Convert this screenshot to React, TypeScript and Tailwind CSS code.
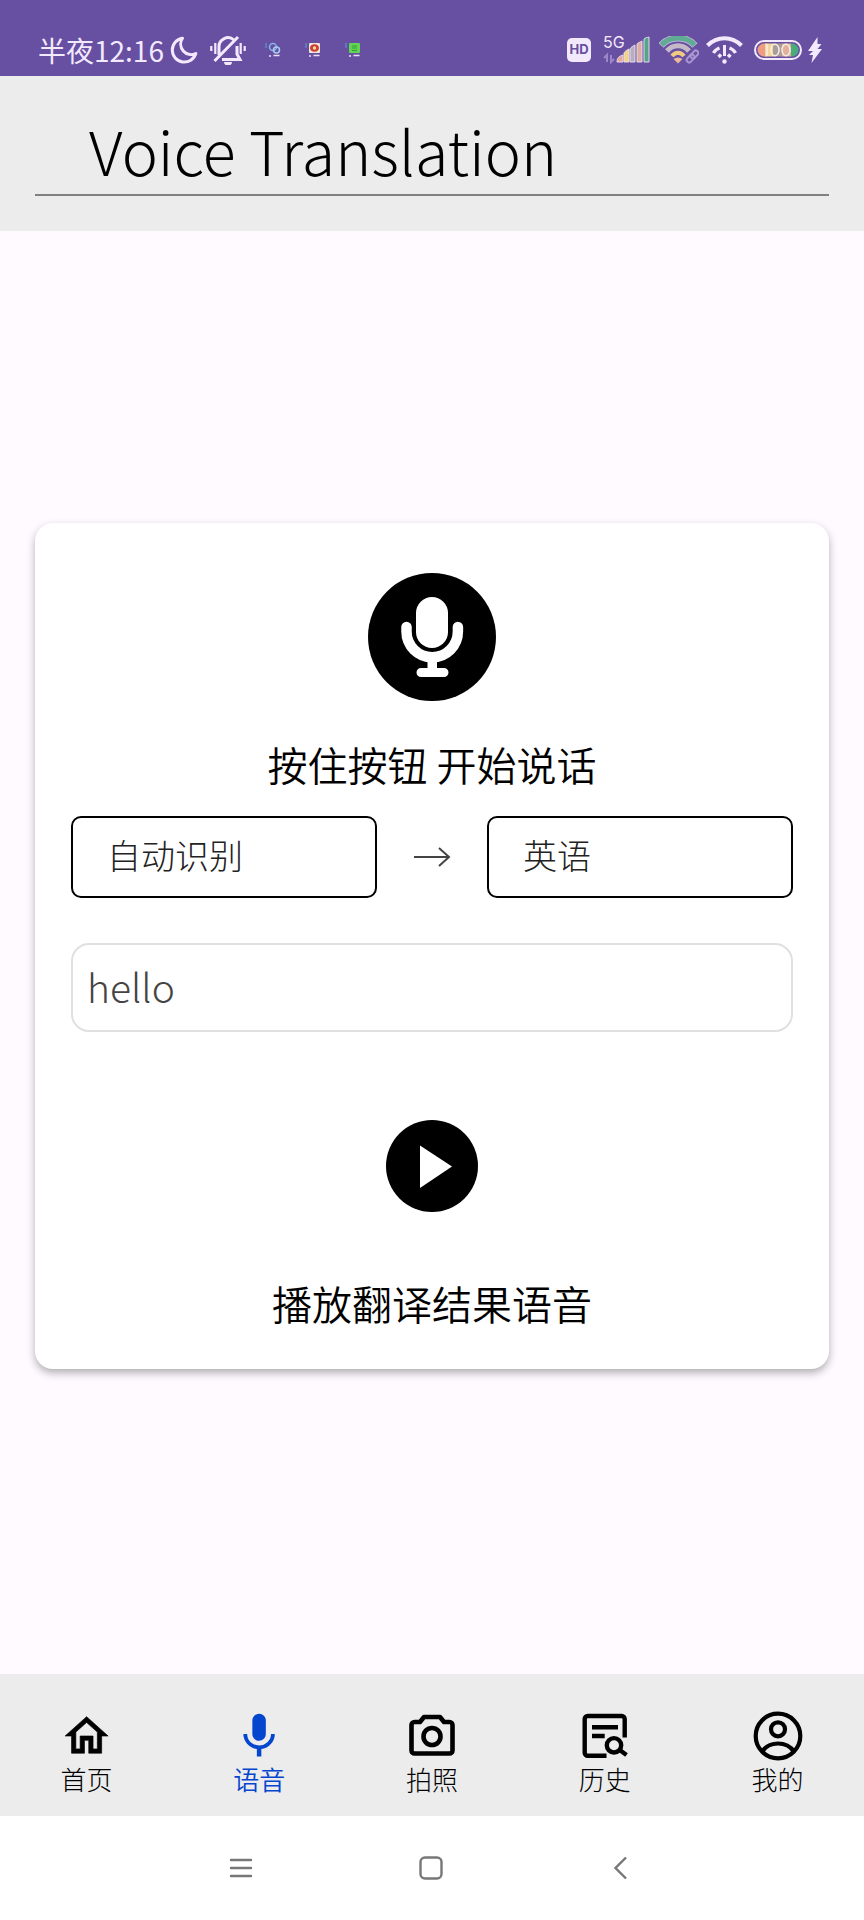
import type { ReactNode } from "react";

type Tab = { label: string; active?: boolean; icon: ReactNode };

const tabs: Tab[] = [
  {
    label: "首页",
    icon: (
      <path
        transform="translate(1.8 1.2) scale(2.15)"
        fill="currentColor"
        stroke="currentColor"
        strokeWidth="0.3"
        d="M12 5.69l5 4.5V18h-2v-6H9v6H7v-7.81l5-4.5M12 3L2 12h3v8h6v-6h2v6h6v-8h3L12 3z"
      />
    ),
  },
  {
    label: "语音",
    active: true,
    icon: (
      <path
        transform="translate(.1 .2) scale(2.25)"
        fill="currentColor"
        d="M12 14c1.66 0 2.99-1.34 2.99-3L15 5c0-1.66-1.34-3-3-3S9 3.34 9 5v6c0 1.66 1.34 3 3 3zm5.3-3c0 3-2.54 5.1-5.3 5.1S6.7 14 6.7 11H5c0 3.41 2.72 6.23 6 6.72V21h2v-3.28c3.28-.48 6-3.3 6-6.72h-1.7z"
      />
    ),
  },
  {
    label: "拍照",
    icon: (
      <g fill="none" stroke="currentColor" strokeWidth="4.6" strokeLinejoin="round">
        <path d="M9.5 13H15l4-5h16l4 5h5.5a3 3 0 0 1 3 3v25.5a3 3 0 0 1-3 3h-35a3 3 0 0 1-3-3V16a3 3 0 0 1 3-3z" />
        <circle cx="27" cy="27.5" r="8.5" />
      </g>
    ),
  },
  {
    label: "历史",
    icon: (
      <g fill="none" stroke="currentColor" strokeWidth="4.4">
        <path d="M46.7 28.5V10a3 3 0 0 0-3-3h-34a3 3 0 0 0-3 3v33.7a3 3 0 0 0 3 3H28.5M14 18.3h26M14 27h12.7" />
        <circle cx="36" cy="36.3" r="7.2" />
        <path d="M41 40.5l7.5 5.5" />
      </g>
    ),
  },
  {
    label: "我的",
    icon: (
      <g fill="none" stroke="currentColor" strokeWidth="4.2">
        <circle cx="27" cy="27" r="22.3" />
        <circle cx="27" cy="20.3" r="7" />
        <path d="M11 42.5c3.5-5 9.3-8 16-8s12.5 3 16 8" />
      </g>
    ),
  },
];

function AppBadge({ color, children }: { color: string; children: ReactNode }) {
  return (
    <svg className="h-4 w-4" viewBox="0 0 16 16" fill="none">
      <path d="M1 1v5" stroke="#5f86c8" strokeWidth="1.5" />
      <rect x="4" y="1" width="11" height="10" rx="1" fill={color} />
      {children}
      <path d="M4 14h2M8.5 13.5h6" stroke="#e9def6" strokeWidth="1.5" />
    </svg>
  );
}

function StatusBar() {
  return (
    <header className="flex h-[76px] items-start justify-between bg-[#674fa1] pt-[35px] pr-[42px] pl-[38px] text-[#f3e9fd]">
      <div className="flex h-[30px] items-center">
        <span className="text-[28px] leading-[28px]">半夜12:16</span>
        <svg className="ml-1.5 h-7 w-7" viewBox="0 0 28 28" fill="none" stroke="currentColor" strokeWidth="3">
          <path d="M12.5 2.2A12 12 0 1 0 25.8 17.5 10.5 10.5 0 0 1 12.5 2.2z" strokeLinejoin="round" />
        </svg>
        <svg className="ml-3 h-[30px] w-9" viewBox="0 0 36 30" fill="none" stroke="currentColor" strokeWidth="3">
          <path d="M1.3 11v5M5.3 8v11M30.7 8v11M34.7 11v5" strokeWidth="2.2" />
          <path d="M9 20V12a9 9 0 0 1 15-7M27 11v8l3 5.5H12M4.5 26L28 2" />
          <path d="M14 27h8a4 3.5 0 0 1-8 0z" fill="currentColor" stroke="none" />
        </svg>
        <div className="ml-[19px] flex gap-6">
          <AppBadge color="transparent">
            <circle cx="8" cy="5" r="3.5" stroke="#86b4e8" strokeWidth="1.5" />
            <circle cx="11.5" cy="8" r="3" stroke="#a9cdf2" strokeWidth="1.5" />
          </AppBadge>
          <AppBadge color="#f1e2dc">
            <ellipse cx="9.5" cy="6" rx="4.5" ry="3.8" fill="#c9422f" />
            <circle cx="9.5" cy="6" r="1.7" fill="#f4dca8" />
          </AppBadge>
          <AppBadge color="#63d552">
            <path d="M7 4h5M7 6h5M7 8.5h5" stroke="#2f9c3a" strokeWidth="1" />
          </AppBadge>
        </div>
      </div>
      <div className="flex h-[30px] items-center">
        <span className="flex h-6 w-6 items-center justify-center rounded-[5px] bg-[#f3e9fd] font-['Inter'] text-[13px] font-bold text-[#674fa1]">
          HD
        </span>
        <svg className="ml-3 h-7 w-12 overflow-visible" viewBox="0 0 48 28">
          <text x="0" y="12" fontSize="16" fill="#f3e9fd" fontFamily="Inter, sans-serif">
            5G
          </text>
          <path d="M4 26v-7l-3 3M8 19v7l3-3" fill="none" stroke="#9c87c9" strokeWidth="2" />
          <g stroke="#e6d9ee" strokeWidth="1">
            <path d="M14 26c0-4 2-6 6-7v7z" fill="#e8a893" />
            <path d="M21 26v-9c1-2 3-3 5-4v13z" fill="#f5d385" />
            <path d="M27 26V13c1-2 3-3 5-4v17z" fill="#b9aebb" />
            <path d="M34 26V8c1-1 3-2 5-3v21z" fill="#dfaea1" />
            <path d="M41 26V3c1-1 3-1.5 5-2v25z" fill="#52a586" />
          </g>
        </svg>
        <svg className="ml-2 h-7 w-10" viewBox="0 0 40 28" fill="none">
          <path d="M2 9.5C11-.5 27-.5 36 9.5" stroke="#b9b5d6" strokeWidth="7" />
          <path d="M2.5 9C11-.5 27-.5 35.5 9" stroke="#5fab93" strokeWidth="5" />
          <path d="M8 15c6-7 16-7 22 0" stroke="#c5b9c9" strokeWidth="5" />
          <path d="M13 20c3.5-4.5 8.5-4.5 12 0" stroke="#f0c982" strokeWidth="4" />
          <path d="M14.5 23c3-2 6-2 9 0L19 27.5z" fill="#ecb89f" />
          <g stroke="#a897d3" strokeWidth="2">
            <rect x="27" y="20" width="9" height="5" rx="2.5" transform="rotate(-48 31.5 22.5)" />
            <rect x="31" y="16" width="9" height="5" rx="2.5" transform="rotate(-48 35.5 18.5)" />
          </g>
        </svg>
        <svg className="ml-[7px] h-7 w-[37px]" viewBox="0 0 37 28" fill="none" stroke="currentColor" strokeWidth="4">
          <path d="M1.5 9.5C11-.3 26-.3 35.5 9.5" />
          <path d="M7.5 17c1.5-2.6 3.5-4.2 6-5M29.5 17c-1.5-2.6-3.5-4.2-6-5M12.5 21l2.5-2.5M24.5 21l-2.5-2.5" strokeWidth="3.4" />
          <path d="M18.5 9v11" strokeWidth="3" />
          <circle cx="18.5" cy="25.5" r="2.2" fill="currentColor" stroke="none" />
        </svg>
        <svg className="ml-[11px] h-5 w-12" viewBox="0 0 48 20">
          <rect x="1" y="1" width="46" height="18" rx="9" fill="none" stroke="#f3e9fd" strokeWidth="2" />
          <path d="M10 3.5h3v13h-3a6.5 6.5 0 0 1 0-13z" fill="#ee9c86" />
          <path d="M11 3.5h9v13h-9z" fill="#f3d69a" />
          <path d="M19 3.5h9v13h-9z" fill="#a99d9c" />
          <path d="M28 3.5h9v13h-9z" fill="#e3b09b" />
          <path d="M37 3.5h1a6.5 6.5 0 0 1 0 13h-1z" fill="#47ad7a" />
          <g fill="none" stroke="#f6ece2" strokeWidth="1.5">
            <path d="M13 4v12" />
            <ellipse cx="21" cy="10" rx="4" ry="5.8" />
            <ellipse cx="32" cy="10" rx="4" ry="5.8" />
          </g>
        </svg>
        <svg className="ml-1.5 h-[26px] w-3.5" viewBox="0 0 14 26" fill="currentColor">
          <path d="M9.5 0L0 14h5L1 18h4l-1.5 8L14 12H9.5l4-5H9.5z" />
        </svg>
      </div>
    </header>
  );
}

function LanguageSelect({ label, options }: { label: string; options: string[] }) {
  return (
    <select
      aria-label={label}
      className="h-[82px] min-w-0 flex-1 appearance-none rounded-[10px] border-2 border-black bg-white pb-1 pl-[34px] text-[34px] font-light text-[#222]"
    >
      {options.map((o) => (
        <option key={o}>{o}</option>
      ))}
    </select>
  );
}

export default function App() {
  return (
    <div className="flex min-h-screen flex-col bg-[#fefaff] font-['Noto_Sans_CJK_SC',sans-serif] text-black">
      <StatusBar />

      <div className="bg-[#ececec] px-[35px] pt-8 pb-[35px]">
        <h1 className="border-b-2 border-[#808080] pb-0.5 pl-[54px] text-[61px] leading-[84px] font-light">
          Voice Translation
        </h1>
      </div>

      <main className="flex flex-1 flex-col justify-center px-[35px] pb-3.5">
        <section className="flex flex-col items-center rounded-[18px] bg-white px-9 pt-[50px] pb-10 shadow-[0_4px_9px_rgba(0,0,0,0.3)]">
          <button aria-labelledby="talk-hint">
            <svg className="block h-32 w-32" viewBox="0 0 128 128">
              <circle cx="64" cy="64" r="64" />
              <rect x="48" y="24" width="32" height="51" rx="16" fill="white" />
              <path
                d="M38.5 54v4.5a25.7 25.7 0 0 0 51.4 0V54"
                fill="none"
                stroke="white"
                strokeWidth="10.5"
                strokeLinecap="round"
              />
              <path d="M59.5 86h9.5v9h7a4.5 4.5 0 0 1 0 9H53a4.5 4.5 0 0 1 0-9h6.5z" fill="white" />
            </svg>
          </button>
          <p id="talk-hint" className="mt-[37px] text-[40px] leading-[52px] font-[350]">
            按住按钮 开始说话
          </p>

          <div className="mt-[26px] flex w-full items-center">
            <LanguageSelect label="源语言" options={["自动识别", "中文", "英语"]} />
            <svg className="mx-[35px] h-10 w-10" viewBox="0 0 40 40" fill="none" stroke="#444" strokeWidth="2">
              <path d="M2 20h35M27 11l10 9-10 9" />
            </svg>
            <LanguageSelect label="目标语言" options={["英语", "中文"]} />
          </div>

          <input
            aria-label="翻译结果"
            defaultValue="hello"
            className="mt-[45px] h-[89px] w-full rounded-[18px] border-2 border-[#e0e0e0] bg-white px-3.5 pb-0.5 text-[39px] font-light text-[#444]"
          />

          <button className="mt-[88px]" aria-labelledby="play-hint">
            <svg className="block h-[92px] w-[92px]" viewBox="0 0 92 92">
              <circle cx="46" cy="46" r="46" />
              <path d="M34 25.5l32 21-32 21.5z" fill="white" />
            </svg>
          </button>
          <p id="play-hint" className="mt-[65px] text-[40px] leading-[52px] font-[350]">
            播放翻译结果语音
          </p>
        </section>
      </main>

      <nav className="grid grid-cols-5 bg-[#ececec] pt-[35px] pb-[21px]">
        {tabs.map((tab) => (
          <a
            key={tab.label}
            href="#"
            aria-current={tab.active ? "page" : undefined}
            className={
              tab.active
                ? "flex flex-col items-center text-[#0546cf]"
                : "flex flex-col items-center text-black"
            }
          >
            <svg className="h-[54px] w-[54px]" viewBox="0 0 54 54">
              {tab.icon}
            </svg>
            <span
              className={
                tab.active ? "text-[26px] leading-8 font-[350]" : "text-[26px] leading-8 font-light"
              }
            >
              {tab.label}
            </span>
          </a>
        ))}
      </nav>

      <footer className="flex h-[104px] items-center justify-center gap-[166px] bg-white pr-0.5 text-[#777]">
        <button aria-label="最近任务">
          <svg className="h-6 w-6" viewBox="0 0 24 24" stroke="currentColor" strokeWidth="2.4" strokeLinecap="round">
            <path d="M2 4h20M2 12h20M2 20h20" />
          </svg>
        </button>
        <button aria-label="主屏幕">
          <svg className="h-6 w-6" viewBox="0 0 24 24" fill="none" stroke="currentColor" strokeWidth="2.4">
            <rect x="1.5" y="1.5" width="21" height="21" rx="4.5" />
          </svg>
        </button>
        <button aria-label="返回">
          <svg className="h-6 w-6" viewBox="0 0 24 24" fill="none" stroke="currentColor" strokeWidth="2.4">
            <path d="M17 1.5L6.5 12 17 22.5" />
          </svg>
        </button>
      </footer>
    </div>
  );
}
